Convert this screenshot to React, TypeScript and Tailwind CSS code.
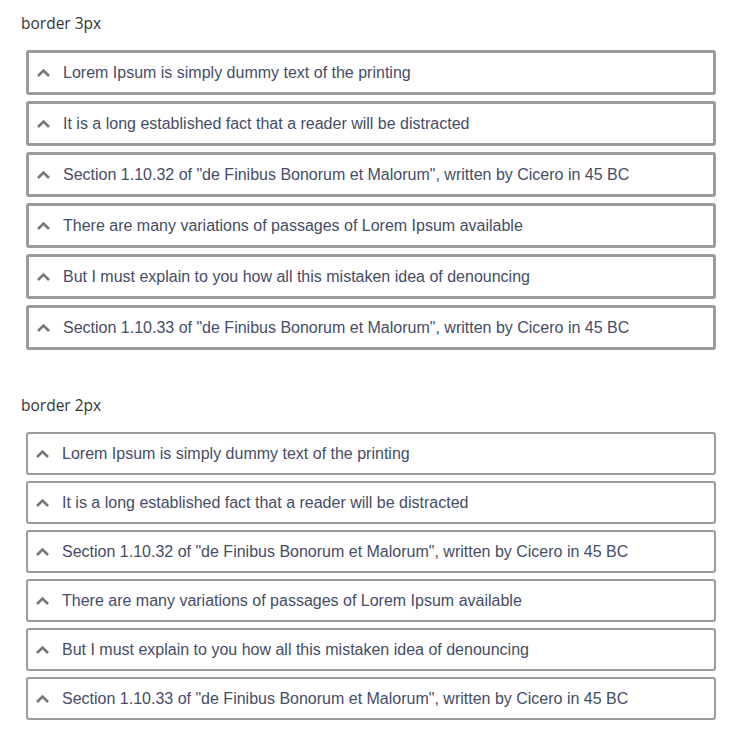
import React from 'react';

const items = [
  'Lorem Ipsum is simply dummy text of the printing',
  'It is a long established fact that a reader will be distracted',
  'Section 1.10.32 of "de Finibus Bonorum et Malorum", written by Cicero in 45 BC',
  'There are many variations of passages of Lorem Ipsum available',
  'But I must explain to you how all this mistaken idea of denouncing',
  'Section 1.10.33 of "de Finibus Bonorum et Malorum", written by Cicero in 45 BC',
];

const Chevron: React.FC = () => (
  <svg width="13" height="8" viewBox="0 0 13 8" fill="none" className="shrink-0">
    <polyline points="1,7 6.5,1.6 12,7" stroke="#777" strokeWidth="2.6" />
  </svg>
);

const Section: React.FC<{ title: string; thick: boolean }> = ({ title, thick }) => {
  return (
    <section className="pt-[13px]">
      <h2 className="pl-[21px] h-5 leading-5 text-[15.5px] text-[#333] font-['Open_Sans',sans-serif]">{title}</h2>
      <div className="mt-[17px] ml-[26px] mr-[25px] flex flex-col gap-[6px]">
        {items.map((text) => (
          <div
            key={text}
            className={`${thick ? 'border-[3px]' : 'border-2'} border-[#9b9b9b] rounded-[3px]`}
          >
            <div className="h-[39px] flex items-center pl-[8px] gap-[13px]">
              <Chevron />
              <span className="text-[16px] text-[#464d66] font-['Liberation_Sans',Arial,sans-serif]">{text}</span>
            </div>
          </div>
        ))}
      </div>
    </section>
  );
};

const App: React.FC = () => {
  return (
    <div className="w-[741px] min-h-[740px] bg-white">
      <Section title="border 3px" thick />
      <div className="h-[32px]" />
      <Section title="border 2px" thick={false} />
    </div>
  );
};

export default App;
